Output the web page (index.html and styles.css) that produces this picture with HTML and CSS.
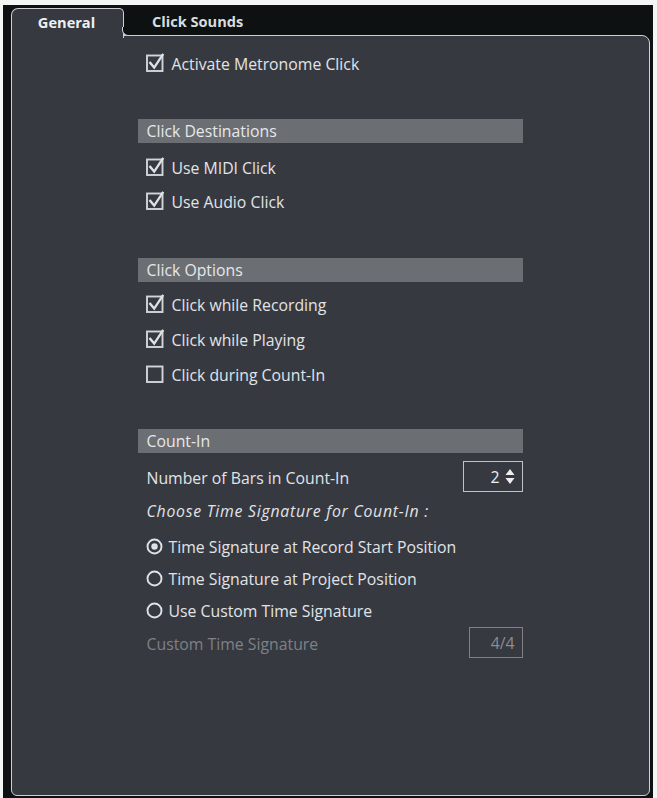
FILE: index.html
```html
<!DOCTYPE html>
<html>
<head>
<meta charset="utf-8">
<link rel="stylesheet" href="styles.css">
</head>
<body>
<div class="window">
  <div class="tabs">
    <div class="tab active">General</div>
    <div class="tab">Click Sounds</div>
  </div>
  <div class="panel">
    <div class="content">
      <div class="row top">
        <svg class="cb" viewBox="0 0 19 19"><rect x="1" y="2.5" width="15.5" height="15.5"/><path d="M4.2 9.8 L8.2 14.6 L16.6 1.8"/></svg>
        <span>Activate Metronome Click</span>
      </div>

      <div class="section s1">Click Destinations</div>
      <div class="row">
        <svg class="cb" viewBox="0 0 19 19"><rect x="1" y="2.5" width="15.5" height="15.5"/><path d="M4.2 9.8 L8.2 14.6 L16.6 1.8"/></svg>
        <span>Use MIDI Click</span>
      </div>
      <div class="row">
        <svg class="cb" viewBox="0 0 19 19"><rect x="1" y="2.5" width="15.5" height="15.5"/><path d="M4.2 9.8 L8.2 14.6 L16.6 1.8"/></svg>
        <span>Use Audio Click</span>
      </div>

      <div class="section s2">Click Options</div>
      <div class="row r35">
        <svg class="cb" viewBox="0 0 19 19"><rect x="1" y="2.5" width="15.5" height="15.5"/><path d="M4.2 9.8 L8.2 14.6 L16.6 1.8"/></svg>
        <span>Click while Recording</span>
      </div>
      <div class="row r35">
        <svg class="cb" viewBox="0 0 19 19"><rect x="1" y="2.5" width="15.5" height="15.5"/><path d="M4.2 9.8 L8.2 14.6 L16.6 1.8"/></svg>
        <span>Click while Playing</span>
      </div>
      <div class="row r35">
        <svg class="cb" viewBox="0 0 19 19"><rect x="1" y="2.5" width="15.5" height="15.5"/></svg>
        <span>Click during Count-In</span>
      </div>

      <div class="section s3">Count-In</div>
      <div class="row field">
        <span>Number of Bars in Count-In</span>
        <div class="spin">
          <span>2</span>
          <svg class="arrows" viewBox="0 0 10 16"><path d="M5 0.5 L9.5 6.5 L0.5 6.5 Z"/><path d="M0.5 9.5 L9.5 9.5 L5 15.5 Z"/></svg>
        </div>
      </div>
      <div class="row italic">Choose Time Signature for Count-In :</div>
      <div class="row r32 first">
        <svg class="rb" viewBox="0 0 17 17"><circle cx="8.5" cy="8.5" r="7"/><circle class="dot" cx="8.5" cy="8.5" r="3.2"/></svg>
        <span>Time Signature at Record Start Position</span>
      </div>
      <div class="row r32">
        <svg class="rb" viewBox="0 0 17 17"><circle cx="8.5" cy="8.5" r="7"/></svg>
        <span>Time Signature at Project Position</span>
      </div>
      <div class="row r32">
        <svg class="rb" viewBox="0 0 17 17"><circle cx="8.5" cy="8.5" r="7"/></svg>
        <span>Use Custom Time Signature</span>
      </div>
      <div class="row field dim">
        <span>Custom Time Signature</span>
        <div class="valbox">4/4</div>
      </div>
    </div>
  </div>
</div>
</body>
</html>
```

FILE: styles.css
```css
* { box-sizing: border-box; }
html, body {
  margin: 0;
  padding: 0;
  background: #f4f6f6;
}
body {
  font-family: "Open Sans", "Noto Sans", sans-serif;
  font-size: 15.8px;
  color: #e1e4e7;
}
.window {
  margin: 5px 0 0 3px;
  width: 650px;
  height: 793px;
  background: #0e1112;
  padding: 3px 3px 2px 8px;
  display: flex;
  flex-direction: column;
}
.tabs {
  display: flex;
  height: 28px;
  position: relative;
  z-index: 2;
}
.tab {
  font-weight: 700;
  font-size: 14.6px;
  color: #d9dcdf;
  display: flex;
  align-items: center;
  padding-bottom: 2px;
}
.tab.active {
  position: relative;
  width: 113px;
  justify-content: center;
  padding-right: 2px;
  background: #363940;
  border: 1.5px solid #cdd1d4;
  border-bottom: none;
  border-radius: 7px 5px 0 0;
  height: 29.5px;
  color: #eef0f2;
}
.tab.active::after {
  content: "";
  position: absolute;
  left: calc(100% - 1.5px);
  bottom: 1.5px;
  width: 8px;
  height: 8px;
  border-left: 1.5px solid #cdd1d4;
  border-bottom: 1.5px solid #cdd1d4;
  border-bottom-left-radius: 6px;
  background: #0e1112;
}
.tab:not(.active) {
  padding-left: 28px;
}
.panel {
  flex: 1;
  background: #363940;
  border: 1.5px solid #cdd1d4;
  border-radius: 0 8px 6px 6px;
  margin-top: -1.5px;
}
.content {
  width: 385px;
  margin-left: 125.5px;
  display: flex;
  flex-direction: column;
}
.row {
  height: 34px;
  display: flex;
  align-items: center;
  padding-left: 8px;
  gap: 7px;
  white-space: nowrap;
}
.row span { position: relative; top: 1px; }
.row.top { margin-top: 10px; }
.row.r35 { height: 35px; }
.row.r32 { height: 32px; gap: 6px; }
.row.first { margin-top: 2px; }
.cb {
  width: 19px;
  height: 19px;
  flex: none;
  margin-top: -1px;
}
.cb rect {
  fill: none;
  stroke: #d2d6d9;
  stroke-width: 1.9;
}
.cb path {
  fill: none;
  stroke: #dfe2e5;
  stroke-width: 2.3;
  stroke-linecap: square;
}
.rb {
  width: 17px;
  height: 17px;
  flex: none;
  margin-top: 1px;
}
.rb circle {
  fill: none;
  stroke: #dfe2e5;
  stroke-width: 1.9;
}
.rb .dot {
  fill: #dfe2e5;
  stroke: none;
}
.section {
  height: 24px;
  background: #6b6e73;
  color: #e6e8ea;
  display: flex;
  align-items: center;
  padding-left: 9px;
}
.s1 { margin-top: 39px; margin-bottom: 7px; }
.s2 { margin-top: 40px; margin-bottom: 5px; }
.s3 { margin-top: 37px; margin-bottom: 7px; }
.field {
  justify-content: space-between;
  padding-left: 9px;
  padding-right: 0;
}
.spin {
  width: 60px;
  height: 31px;
  border: 1.5px solid #bfc3c6;
  display: flex;
  align-items: center;
  justify-content: flex-end;
  gap: 5px;
  padding-right: 7px;
  color: #eceef0;
}
.spin span { top: 0; }
.arrows {
  width: 10px;
  height: 17px;
}
.arrows path { fill: #eceef0; }
.italic {
  font-style: italic;
  padding-left: 9px;
  letter-spacing: 0.75px;
  padding-top: 1px;
}
.dim { color: #7e8187; }
.valbox {
  width: 54px;
  height: 31px;
  border: 1.5px solid #7f8286;
  display: flex;
  align-items: center;
  justify-content: flex-end;
  padding-right: 7px;
  color: #8a8d92;
}
```
